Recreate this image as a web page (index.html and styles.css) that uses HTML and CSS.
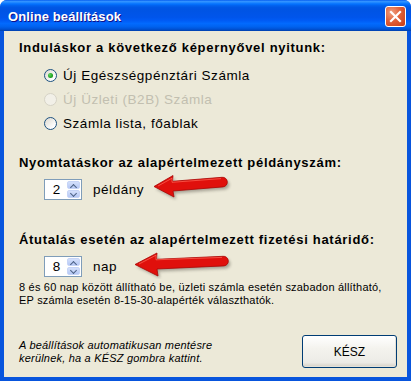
FILE: index.html
```
<!DOCTYPE html>
<html lang="hu">

<head>
    <meta charset="UTF-8">
    <title>Online beállítások</title>
    <link rel="stylesheet" href="styles.css">
</head>

<body>
    <div class="window">
        <div class="titlebar">
            <span class="title">Online beállítások</span>
            <span class="close-btn">
                <svg width="13" height="13" viewBox="0 0 13 13">
                    <path d="M2 2 L11 11 M11 2 L2 11" stroke="#fff" stroke-width="2.2" stroke-linecap="square" />
                </svg>
            </span>
        </div>

        <div class="content">
            <div class="heading">Induláskor a következő képernyővel nyitunk:</div>
            <div class="radio-list">
                <label class="radio-row">
                    <span class="radio checked"></span>
                    <span>Új Egészségpénztári Számla</span>
                </label>
                <label class="radio-row disabled">
                    <span class="radio"></span>
                    <span>Új Üzleti (B2B) Számla</span>
                </label>
                <label class="radio-row">
                    <span class="radio"></span>
                    <span>Számla lista, főablak</span>
                </label>
            </div>

            <div class="heading heading-print">Nyomtatáskor az alapértelmezett példányszám:</div>
            <div class="spin-row">
                <div class="spinner">
                    <span class="spin-value">2</span>
                    <span class="spin-btns">
                        <span class="spin-up"></span>
                        <span class="spin-down"></span>
                    </span>
                </div>
                <span class="spin-label">példány</span>
                <svg class="arrow arrow-short" width="80" height="28" viewBox="0 0 80 28">
                    <defs>
                        <filter id="blur1" x="-10%" y="-30%" width="120%" height="160%">
                            <feGaussianBlur stdDeviation="1.4" />
                        </filter>
                    </defs>
                    <path d="M4 15 L23 4 L22 10 L72 6 A4.8 4.8 0 0 1 73 15.6 L23 19.5 L24 25.5 Z" fill="#6e6a60" opacity="0.55" filter="url(#blur1)" />
                    <path d="M2 12.5 L21 1.5 L20.5 7.3 L70 3.3 A4.8 4.8 0 0 1 71 12.9 L21 17 L22 23 Z" fill="#e0100c" stroke="#a80605" stroke-width="0.8" />
                    <path d="M6 12 L20 4.2 L20 8.3 L69 4.6" fill="none" stroke="#ff6a5a" stroke-width="1" opacity="0.7" />
                </svg>
            </div>

            <div class="heading heading-pay">Átutalás esetén az alapértelmezett fizetési határidő:</div>
            <div class="spin-row">
                <div class="spinner">
                    <span class="spin-value">8</span>
                    <span class="spin-btns">
                        <span class="spin-up"></span>
                        <span class="spin-down"></span>
                    </span>
                </div>
                <span class="spin-label">nap</span>
                <svg class="arrow arrow-long" width="100" height="28" viewBox="0 0 100 28">
                    <defs>
                        <filter id="blur2" x="-10%" y="-30%" width="120%" height="160%">
                            <feGaussianBlur stdDeviation="1.4" />
                        </filter>
                    </defs>
                    <path d="M4 16 L26 5 L25.5 11 L92 8 A4.8 4.8 0 0 1 93 17.6 L26 20.5 L27 27 Z" fill="#6e6a60" opacity="0.55" filter="url(#blur2)" />
                    <path d="M2 13.5 L24 2 L23.5 8.3 L90 5.3 A4.8 4.8 0 0 1 91 14.9 L24 18 L25 25 Z" fill="#e0100c" stroke="#a80605" stroke-width="0.8" />
                    <path d="M6 13 L23 4.2 L23 8.8 L89 6.4" fill="none" stroke="#ff6a5a" stroke-width="1" opacity="0.7" />
                </svg>
            </div>
            <div class="note">
                8 és 60 nap között állítható be, üzleti számla esetén szabadon állítható,<br>
                EP számla esetén 8-15-30-alapérték választhatók.
            </div>

            <div class="footer">
                <div class="footer-text">
                    A beállítások automatikusan mentésre<br>
                    kerülnek, ha a KÉSZ gombra kattint.
                </div>
                <button class="btn" type="button">KÉSZ</button>
            </div>
        </div>
    </div>
</body>

</html>
```

FILE: styles.css
```
* {
    padding: 0;
    margin: 0;
    box-sizing: border-box;
}

body {
    background: #fff;
    font-family: "Liberation Sans", Arial, sans-serif;
}

.window {
    width: 411px;
    height: 381px;
    display: flex;
    flex-direction: column;
    background: #0855dd;
    border-radius: 7px 7px 0 0;
    overflow: hidden;
}

.titlebar {
    height: 31px;
    display: flex;
    align-items: center;
    justify-content: space-between;
    padding: 1px 5px 0 8px;
    background: linear-gradient(#0058ee 0%, #3593ff 4%, #288eff 7%, #127dff 10%, #036ffc 14%, #0262ee 18%, #0057e5 24%, #0054e3 30%, #0055eb 56%, #005bf5 66%, #026afe 76%, #0062ef 86%, #0052d6 94%, #0040ab 100%);
}

.title {
    color: #fff;
    font-weight: bold;
    font-size: 13px;
    letter-spacing: 0.1px;
    text-shadow: 1px 1px #0f1089;
}

.close-btn {
    width: 21px;
    height: 21px;
    border: 1px solid #fff;
    border-radius: 3px;
    background: radial-gradient(circle at 30% 30%, #f0a080 0%, #e0603a 45%, #c83c14 100%);
    display: flex;
    align-items: center;
    justify-content: center;
}

.content {
    flex: 1;
    margin: 0 4px 4px;
    background: #ece9d8;
    padding: 9px 10px 0 15px;
    display: flex;
    flex-direction: column;
    color: #000;
}

.heading {
    font-size: 13px;
    font-weight: bold;
    line-height: 16px;
    letter-spacing: 0.7px;
}

.heading-print {
    margin-top: 20px;
}

.heading-pay {
    margin-top: 32px;
}

.radio-list {
    margin-top: 7px;
    padding-left: 25px;
}

.radio-row {
    height: 24px;
    display: flex;
    align-items: center;
    gap: 6px;
    font-size: 13.5px;
    letter-spacing: 0.55px;
}

.radio {
    width: 13px;
    height: 13px;
    border-radius: 50%;
    border: 1px solid #1c5180;
    background: linear-gradient(135deg, #dcd9cf 0%, #fff 80%);
    position: relative;
}

.radio.checked::after {
    content: "";
    position: absolute;
    left: 3px;
    top: 3px;
    width: 5px;
    height: 5px;
    border-radius: 50%;
    background: radial-gradient(circle at 35% 35%, #5ed85e 0%, #21a121 60%, #1a801a 100%);
}

.radio-row.disabled {
    color: #c2bfb0;
}

.radio-row.disabled .radio {
    border-color: #d6d3c6;
    background: #f2f0e8;
}

.spin-row {
    margin-top: 8px;
    padding-left: 25px;
    height: 21px;
    display: flex;
    align-items: center;
}

.spinner {
    width: 38px;
    height: 21px;
    border: 1px solid #7f9db9;
    background: #fff;
    display: flex;
    align-items: center;
}

.spin-value {
    flex: 1;
    text-align: center;
    font-size: 13.5px;
    padding-left: 1px;
}

.spin-btns {
    width: 13px;
    height: 17px;
    margin-right: 1px;
    display: flex;
    flex-direction: column;
    gap: 1px;
}

.spin-up,
.spin-down {
    flex: 1;
    border-radius: 2px;
    background: linear-gradient(#d4e0fb, #b5c8f5);
    border: 1px solid #c6d4f7;
    position: relative;
}

.spin-up::after,
.spin-down::after {
    content: "";
    position: absolute;
    left: 3px;
    width: 4px;
    height: 4px;
    border-left: 1.5px solid #4d6185;
    border-top: 1.5px solid #4d6185;
}

.spin-up::after {
    top: 3px;
    transform: rotate(45deg);
}

.spin-down::after {
    top: 0;
    transform: rotate(225deg);
}

.spin-label {
    margin-left: 11px;
    font-size: 13.5px;
    letter-spacing: 0.55px;
}

.arrow-short {
    margin-left: 8px;
    margin-top: -4px;
}

.arrow-long {
    margin-left: 16px;
    margin-top: -3px;
}

.note {
    margin-top: 4px;
    font-size: 11px;
    line-height: 13px;
    letter-spacing: 0.2px;
}

.footer {
    margin-top: 28px;
    display: flex;
    align-items: center;
    justify-content: space-between;
}

.footer-text {
    font-size: 11px;
    font-style: italic;
    line-height: 13px;
    letter-spacing: 0.2px;
}

.btn {
    width: 95px;
    height: 33px;
    border: 1px solid #003c74;
    border-radius: 3px;
    background: linear-gradient(#fff 0%, #f4f3ee 40%, #ecebe6 85%, #d6d0c5 100%);
    box-shadow: inset -1px -1px 0 #e3e1d8;
    font-family: "Liberation Sans", Arial, sans-serif;
    font-size: 12px;
    color: #000;
}
```
